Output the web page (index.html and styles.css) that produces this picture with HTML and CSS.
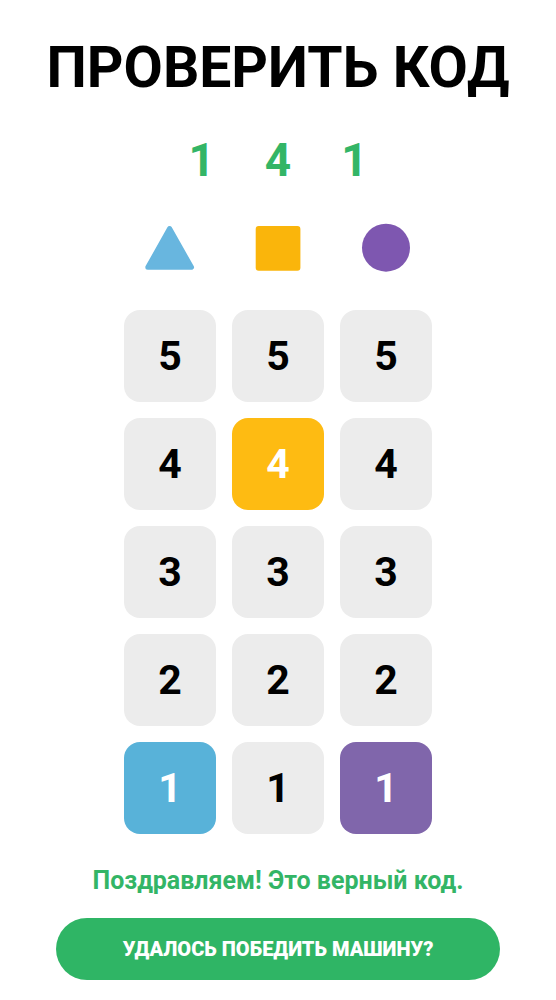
FILE: index.html
```html
<!DOCTYPE html>
<html lang="ru">
<head>
  <meta charset="UTF-8">
  <meta name="viewport" content="width=device-width, initial-scale=1.0">
  <title>Проверить код</title>
  <link rel="stylesheet" href="styles.css">
</head>
<body>
  <main class="container">
    <h1>ПРОВЕРИТЬ КОД</h1>

    <div class="code">
      <span>1</span>
      <span>4</span>
      <span>1</span>
    </div>

    <div class="shapes">
      <svg class="shape" viewBox="0 0 52 52" aria-hidden="true">
        <path d="M25.6 6.5 L47.5 45.3 H3.8 Z" fill="#68b6df" stroke="#68b6df" stroke-width="5" stroke-linejoin="round"/>
      </svg>
      <svg class="shape" viewBox="0 0 52 52" aria-hidden="true">
        <rect x="3.7" y="4" width="44.7" height="44.7" rx="3" fill="#fab50b"/>
      </svg>
      <svg class="shape" viewBox="0 0 52 52" aria-hidden="true">
        <circle cx="26" cy="25.7" r="24" fill="#7e57b0"/>
      </svg>
    </div>

    <div class="keypad">
      <button type="button" class="key">5</button>
      <button type="button" class="key">5</button>
      <button type="button" class="key">5</button>

      <button type="button" class="key">4</button>
      <button type="button" class="key yellow">4</button>
      <button type="button" class="key">4</button>

      <button type="button" class="key">3</button>
      <button type="button" class="key">3</button>
      <button type="button" class="key">3</button>

      <button type="button" class="key">2</button>
      <button type="button" class="key">2</button>
      <button type="button" class="key">2</button>

      <button type="button" class="key blue">1</button>
      <button type="button" class="key">1</button>
      <button type="button" class="key purple">1</button>
    </div>

    <p class="message">Поздравляем! Это верный код.</p>
    <button type="button" class="submit">УДАЛОСЬ ПОБЕДИТЬ МАШИНУ?</button>
  </main>
</body>
</html>
```
FILE: styles.css
```css
* {
  box-sizing: border-box;
}

body {
  margin: 0;
  background-color: #fff;
  color: #000;
  font-family: Roboto, sans-serif;
}

.container {
  display: flex;
  flex-direction: column;
  align-items: center;
  padding: 32px 16px 20px;
}

h1 {
  margin: 0;
  font-size: 57px;
  line-height: 72px;
  font-weight: 700;
  text-align: center;
}

.code {
  display: flex;
  gap: 50px;
  margin-top: 28px;
  color: #33b566;
  font-size: 46px;
  line-height: 56px;
  font-weight: 700;
}

.shapes {
  display: grid;
  grid-template-columns: repeat(3, 92px);
  column-gap: 16px;
  justify-items: center;
  margin-top: 34px;
}

.shape {
  width: 52px;
  height: 52px;
}

.keypad {
  display: grid;
  grid-template-columns: repeat(3, 92px);
  gap: 16px;
  margin-top: 36px;
}

.key {
  height: 92px;
  padding: 0;
  border: none;
  border-radius: 16px;
  background-color: #ececec;
  color: #000;
  font-family: inherit;
  font-size: 41px;
  font-weight: 700;
  cursor: pointer;
}

.yellow {
  background-color: #febb12;
  color: #fff;
}

.blue {
  background-color: #58b2d9;
  color: #fff;
}

.purple {
  background-color: #8066ab;
  color: #fff;
}

.message {
  margin: 32px 0 0;
  color: #33b566;
  font-size: 25px;
  line-height: 30px;
  font-weight: 700;
  text-align: center;
}

.submit {
  width: 100%;
  max-width: 444px;
  height: 62px;
  margin-top: 22px;
  padding: 0 16px;
  border: none;
  border-radius: 32px;
  background-color: #2fb565;
  color: #fff;
  font-family: inherit;
  font-size: 20px;
  font-weight: 900;
  cursor: pointer;
}
```
